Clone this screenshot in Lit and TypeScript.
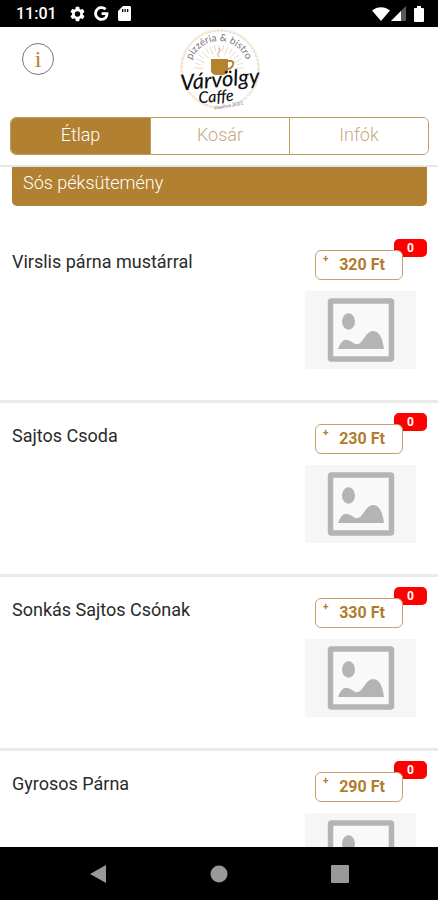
import { LitElement, html, css, svg } from "lit";
import { customElement, property, state } from "lit/decorators.js";
import { classMap } from "lit/directives/class-map.js";

@customElement("status-bar")
class StatusBar extends LitElement {
  static styles = css`
    :host {
      display: flex;
      align-items: center;
      height: 27px;
      padding: 0 14px 0 16px;
      background: #000;
      color: #fff;
    }
    .time {
      font-size: 16px;
      font-weight: 500;
      line-height: 27px;
    }
    .left,
    .right {
      display: flex;
      align-items: center;
    }
    .left {
      gap: 9px;
      margin-left: 13px;
    }
    .right {
      margin-left: auto;
      gap: 1px;
    }
    .battery {
      margin-left: 7px;
    }
    svg {
      display: block;
      fill: #fff;
    }
  `;

  render() {
    return html`
      <span class="time">11:01</span>
      <div class="left">
        <svg width="15" height="16" viewBox="2 2 20 20">
          <path d="M19.14 12.94c.04-.3.06-.61.06-.94 0-.32-.02-.64-.07-.94l2.03-1.58c.18-.14.23-.41.12-.61l-1.92-3.32c-.12-.22-.37-.29-.59-.22l-2.39.96c-.5-.38-1.03-.7-1.62-.94l-.36-2.54c-.04-.24-.24-.41-.48-.41h-3.84c-.24 0-.43.17-.47.41l-.36 2.54c-.59.24-1.13.57-1.62.94l-2.39-.96c-.22-.08-.47 0-.59.22L2.74 8.87c-.12.21-.08.47.12.61l2.03 1.58c-.05.3-.09.63-.09.94s.02.64.07.94l-2.03 1.58c-.18.14-.23.41-.12.61l1.92 3.32c.12.22.37.29.59.22l2.39-.96c.5.38 1.03.7 1.62.94l.36 2.54c.05.24.24.41.48.41h3.84c.24 0 .44-.17.47-.41l.36-2.54c.59-.24 1.13-.56 1.62-.94l2.39.96c.22.08.47 0 .59-.22l1.92-3.32c.12-.22.07-.47-.12-.61l-2.01-1.58zM12 15.6a3.6 3.6 0 1 1 0-7.2 3.6 3.6 0 0 1 0 7.2z" />
        </svg>
        <svg width="15" height="15" viewBox="0 0 15 15">
          <path d="M7.6 6.2h6.8c.5 5-2.300 8.600-6.900 8.600A7.300 7.300 0 1 1 12.500 2.200l-2 2A4.500 4.500 0 1 0 7.500 12c2.200 0 3.500-1.100 4-3H7.600z" />
        </svg>
        <svg width="13" height="15" viewBox="0 0 13 15">
          <path fill-rule="evenodd" d="M5 0h6.500C12.400 0 13 .6 13 1.500v12c0 .9-.6 1.500-1.500 1.500h-10C.6 15 0 14.400 0 13.500V5zM4 3v3h1.300V3zM6.500 3v3h1.300V3zM9 3v3h1.300V3z" />
        </svg>
      </div>
      <div class="right">
        <svg width="18" height="14" viewBox="0 0 18 14">
          <path d="M0 3.500C5-1 13-1 18 3.500L9 14z" />
        </svg>
        <svg width="15" height="15" viewBox="0 0 15 15">
          <path d="M15 0v15H0z" opacity=".35" />
          <path d="M10 5v10H0z" />
        </svg>
        <svg class="battery" width="10" height="16" viewBox="0 0 10 16">
          <path d="M3 0h4v2h2q1 0 1 1v12q0 1-1 1H1q-1 0-1-1V3q0-1 1-1h2z" />
        </svg>
      </div>
    `;
  }
}

@customElement("cafe-logo")
class CafeLogo extends LitElement {
  static styles = css`
    :host {
      display: block;
    }
    svg {
      display: block;
    }
    .name,
    .sub {
      font-family: "Lato", sans-serif;
      font-style: italic;
      font-weight: 500;
      fill: #111;
    }
    .name {
      font-size: 22px;
    }
    .sub {
      font-size: 16px;
    }
    .arc {
      font-family: "Lato", sans-serif;
      font-size: 10px;
      fill: #777;
    }
    .foot {
      font-family: "Lato", sans-serif;
      font-size: 5px;
      fill: #888;
    }
  `;

  render() {
    const rays = Array.from({ length: 17 }, (_, i) => {
      const a = (Math.PI * (i + 17)) / 17 + Math.PI / 34;
      const x = Math.cos(a);
      const y = Math.sin(a);
      const from = i % 2 ? 19 : 16;
      return svg`<line x1=${41 + from * x} y1=${43 + from * y} x2=${41 + 25 * x} y2=${43 + 25 * y} stroke="#e4dccf" stroke-width="1" />`;
    });
    return html`
      <svg width="84" height="84" viewBox="0 0 84 84" role="img" aria-label="Várvölgy Caffe">
        <circle cx="42" cy="42" r="39" fill="#fff" stroke="#f8ecdb" stroke-width="2" />
        <circle cx="42" cy="42" r="38" fill="none" stroke="#d8d3cb" stroke-width="1" stroke-dasharray="2 2" />
        ${rays}
        <path id="arc" d="M12 43A29 29 0 0 1 70 43" fill="none" />
        <text class="arc"><textPath href="#arc" startOffset="50%" text-anchor="middle">pizzéria &amp; bistro</textPath></text>
        <path d="M41 30q-3-3 0-5t0-4" fill="none" stroke="#d5a95e" stroke-width="1" />
        <path d="M33 32h17v13q-2 3-5 3h-7q-4 0-5-4z" fill="#b4832f" />
        <path d="M50 34h3q3 0 2 4 -1 3-5 4" fill="none" stroke="#b4832f" stroke-width="2" />
        <g transform="rotate(-5 42 54)">
          <text class="name" x="42" y="60" text-anchor="middle">Várvölgy</text>
        </g>
        <g transform="rotate(-4 38 70)">
          <text class="sub" x="38" y="75" text-anchor="middle">Caffe</text>
        </g>
        <text class="foot" x="51" y="80" text-anchor="middle" transform="rotate(-10 51 80)">alapítva 2021</text>
      </svg>
    `;
  }
}

@customElement("menu-item")
class MenuItem extends LitElement {
  @property() name = "";
  @property({ type: Number }) price = 0;
  @state() private count = 0;

  static styles = css`
    :host {
      display: flex;
      justify-content: space-between;
      box-sizing: border-box;
      height: 174px;
      flex: none;
      padding: 21px 22px 0 12px;
      border-bottom: 3px solid #ebebeb;
    }
    .name {
      margin: 0;
      font-size: 18px;
      font-weight: 400;
      line-height: 24px;
      color: #2a2a2a;
    }
    .side {
      display: flex;
      flex-direction: column;
      gap: 11px;
      width: 111px;
    }
    .order {
      position: relative;
      width: 88px;
      margin-left: 10px;
    }
    .price {
      position: relative;
      display: block;
      box-sizing: border-box;
      width: 100%;
      height: 30px;
      padding: 0 0 0 6px;
      border: 1px solid #c9a06a;
      border-radius: 6px;
      background: #fff;
      color: #b07c2c;
      font: 700 16px/28px "Roboto", sans-serif;
      cursor: pointer;
    }
    .plus {
      position: absolute;
      top: 3px;
      left: 7px;
      font-size: 10px;
      line-height: 10px;
    }
    .count {
      position: absolute;
      top: -11px;
      right: -24px;
      width: 33px;
      height: 18px;
      border-radius: 5px;
      background: #f00;
      color: #fff;
      font-size: 12px;
      font-weight: 700;
      line-height: 19px;
      text-align: center;
    }
    svg {
      display: block;
    }
  `;

  render() {
    return html`
      <h3 class="name">${this.name}</h3>
      <div class="side">
        <div class="order">
          <span class="count">${this.count}</span>
          <button class="price" @click=${() => this.count++}>
            <span class="plus">+</span>${this.price} Ft
          </button>
        </div>
        <svg width="111" height="78" viewBox="0 0 111 78" aria-hidden="true">
          <rect width="111" height="78" fill="#f6f6f6" />
          <rect x="25.500" y="10" width="61" height="58" rx="1" fill="#f9f9f9" stroke="#b4b4b4" stroke-width="5.500" />
          <ellipse cx="43.500" cy="30.500" rx="6.500" ry="8.300" fill="#b4b4b4" />
          <path d="M33 58C35 53 38 48 42 49c4 0 7 5 11 4 5-1 8-13 15-13 7 0 10 9 11 18z" fill="#b4b4b4" />
        </svg>
      </div>
    `;
  }
}

@customElement("app-root")
class AppRoot extends LitElement {
  @state() private tab = 0;

  private tabs = ["Étlap", "Kosár", "Infók"];
  private items = [
    { name: "Virslis párna mustárral", price: 320 },
    { name: "Sajtos Csoda", price: 230 },
    { name: "Sonkás Sajtos Csónak", price: 330 },
    { name: "Gyrosos Párna", price: 290 },
  ];

  static styles = css`
    :host {
      display: flex;
      flex-direction: column;
      height: 100vh;
      background: #fff;
      font-family: "Roboto", sans-serif;
    }
    header {
      flex: none;
      padding: 0 9px 10px 10px;
      border-bottom: 2px solid #e6e6e6;
    }
    .brand {
      display: grid;
      grid-template-columns: 1fr auto 1fr;
      align-items: start;
      height: 90px;
    }
    .info {
      width: 32px;
      height: 32px;
      margin: 16px 0 0 12px;
      padding: 0;
      border: 1px solid #777;
      border-radius: 50%;
      background: #fff;
      color: #b9812f;
      font: 24px/28px "Liberation Serif", serif;
      cursor: pointer;
    }
    .tabs {
      display: grid;
      grid-template-columns: repeat(3, 1fr);
      height: 38px;
      box-sizing: border-box;
      border: 1px solid #c39a62;
      border-radius: 6px;
      overflow: hidden;
    }
    .tab {
      padding: 0 0 2px;
      border: 0;
      background: #fff;
      color: #c9a882;
      font: 300 18px/34px "Roboto", sans-serif;
      cursor: pointer;
    }
    .tab + .tab {
      border-left: 1px solid #c39a62;
    }
    .tab.active {
      background: #b18030;
      color: #fff;
    }
    main {
      flex: 1;
      min-height: 0;
      display: flex;
      flex-direction: column;
      overflow-y: auto;
      scrollbar-width: none;
    }
    .category {
      flex: none;
      margin: 0 11px 23px 12px;
      padding: 4px 11px 11px;
      border-radius: 0 0 5px 5px;
      background: #b18030;
      color: #fff;
      font-size: 18px;
      font-weight: 300;
      line-height: 24px;
    }
    nav {
      flex: none;
      display: flex;
      justify-content: center;
      gap: 97px;
      height: 53px;
      background: #000;
    }
    .key {
      display: grid;
      place-items: center;
      width: 24px;
      padding: 0;
      border: 0;
      background: none;
      cursor: pointer;
    }
    .key svg {
      display: block;
      fill: #999;
    }
  `;

  render() {
    return html`
      <status-bar></status-bar>
      <header>
        <div class="brand">
          <button class="info" aria-label="Információ">i</button>
          <cafe-logo></cafe-logo>
        </div>
        <div class="tabs" role="tablist">
          ${this.tabs.map(
            (label, i) => html`<button
              role="tab"
              aria-selected=${i === this.tab}
              class=${classMap({ tab: true, active: i === this.tab })}
              @click=${() => (this.tab = i)}
            >${label}</button>`
          )}
        </div>
      </header>
      <main>
        <h2 class="category">Sós péksütemény</h2>
        ${this.items.map((item) => html`<menu-item .name=${item.name} .price=${item.price}></menu-item>`)}
      </main>
      <nav>
        <button class="key" aria-label="Vissza">
          <svg width="18" height="20" viewBox="0 0 18 20"><path d="M17 1v18L1 10z" /></svg>
        </button>
        <button class="key" aria-label="Kezdőképernyő">
          <svg width="18" height="18" viewBox="0 0 18 18"><circle cx="9" cy="9" r="8.500" /></svg>
        </button>
        <button class="key" aria-label="Áttekintés">
          <svg width="18" height="18" viewBox="0 0 18 18"><rect width="18" height="18" rx="1" /></svg>
        </button>
      </nav>
    `;
  }
}
